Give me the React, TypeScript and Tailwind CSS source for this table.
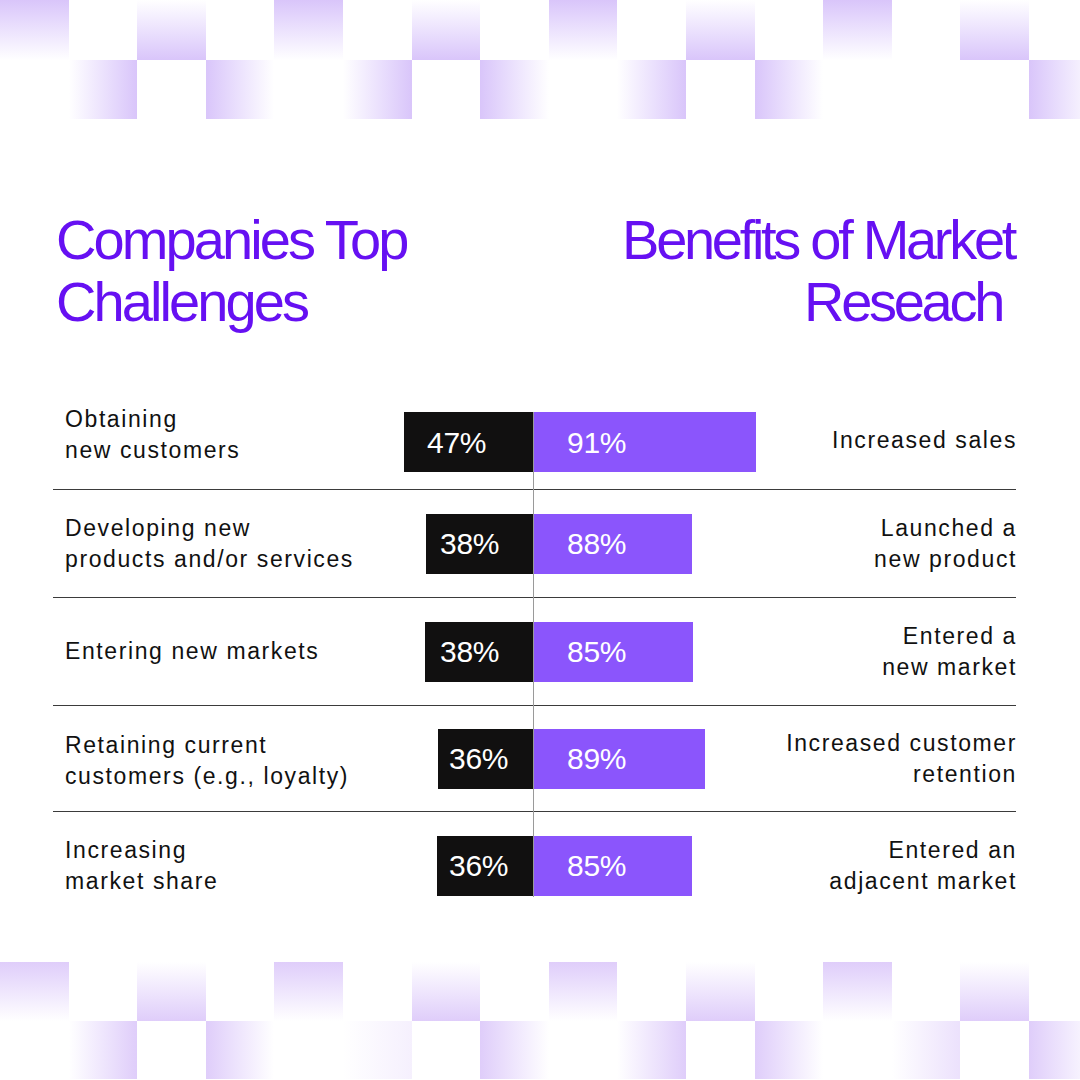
const font = { fontFamily: '"Liberation Sans", Arial, sans-serif' };

type Dir = "b" | "t" | "l" | "r" | null;

const dirClass: Record<string, string> = {
  b: "bg-linear-to-b",
  t: "bg-linear-to-t",
  l: "bg-linear-to-l",
  r: "bg-linear-to-r",
};

// each band: two rows of 16 cells, null = empty cell
const topBand: { h: string; cells: Dir[]; faint?: number[] }[] = [
  { h: "h-[60px]", cells: ["b", null, "t", null, "b", null, "t", null, "b", null, "t", null, "b", null, "t", null] },
  { h: "h-[59px]", cells: [null, "l", null, "r", null, "l", null, "r", null, "l", null, "r", null, null, null, "r"] },
];

const bottomBand: { h: string; cells: Dir[]; faint?: number[] }[] = [
  { h: "h-[59px]", cells: ["b", null, "t", null, "b", null, "t", null, "b", null, "t", null, "b", null, "t", null] },
  { h: "h-[58px]", cells: [null, "l", null, "r", null, "l", null, "r", null, "l", null, "r", null, "l", null, "r"], faint: [5, 13] },
];

function Band({ rows, color }: { rows: typeof topBand; color: string }) {
  return (
    <div className="flex flex-col overflow-hidden w-[1080px]">
      {rows.map((row, ri) => (
        <div key={ri} className={`flex ${row.h}`}>
          {row.cells.map((d, ci) => (
            <div
              key={ci}
              className={`w-[68.6px] shrink-0 h-full ${d ? `${dirClass[d]} ${color} to-white` : ""} ${
                row.faint?.includes(ci) ? (ci === 5 ? "opacity-30" : "opacity-60") : ""
              }`}
            />
          ))}
        </div>
      ))}
    </div>
  );
}

const rows = [
  {
    left: ["Obtaining", "new customers"],
    right: ["Increased sales"],
    a: "47%",
    b: "91%",
    aw: "w-[129px]",
    bw: "w-[223px]",
    apl: "pl-[23px]",
    h: "h-[94px]",
    lift: "-mt-[14px]",
  },
  {
    left: ["Developing new", "products and/or services"],
    right: ["Launched a", "new product"],
    a: "38%",
    b: "88%",
    aw: "w-[107px]",
    bw: "w-[159px]",
    apl: "pl-[14px]",
    h: "h-[108px]",
    lift: "",
  },
  {
    left: ["Entering new markets"],
    right: ["Entered a", "new market"],
    a: "38%",
    b: "85%",
    aw: "w-[108px]",
    bw: "w-[160px]",
    apl: "pl-[15px]",
    h: "h-[108px]",
    lift: "",
  },
  {
    left: ["Retaining current", "customers (e.g., loyalty)"],
    right: ["Increased customer", "retention"],
    a: "36%",
    b: "89%",
    aw: "w-[95px]",
    bw: "w-[172px]",
    apl: "pl-[11px]",
    h: "h-[106px]",
    lift: "mt-[4px]",
  },
  {
    left: ["Increasing", "market share"],
    right: ["Entered an", "adjacent market"],
    a: "36%",
    b: "85%",
    aw: "w-[96px]",
    bw: "w-[159px]",
    apl: "pl-[12px]",
    h: "h-[108px]",
    lift: "",
  },
];

export default function App() {
  return (
    <div className="w-[1080px] h-[1080px] bg-white overflow-hidden flex flex-col" style={font}>
      <Band rows={topBand} color="from-[#d9c5fa]" />

      <div className="ml-[53px] w-[963px] mt-[90px]">
        {/* titles */}
        <div className="flex justify-between text-[56px] leading-[62px] text-[#6610f2]">
          <h1 className="ml-[3px] tracking-[-2.9px]">
            Companies Top
            <br />
            Challenges
          </h1>
          <h1 className="text-right mr-[2px] tracking-[-3.3px]">
            Benefits of Market
            <br />
            <span className="pr-[12px]">Reseach</span>
          </h1>
        </div>

        {/* comparison table */}
        <div className="relative mt-[62px]">
          {rows.map((r, i) => (
            <div
              key={i}
              className={`flex items-center ${r.h} ${i > 0 ? "border-t-[1.5px] border-[#3b3b3b]" : ""}`}
            >
              <div className="w-[480px] flex items-center justify-between">
                <div className={`pl-[12px] text-[23px] leading-[31px] tracking-[1.6px] text-[#111] ${r.lift}`}>
                  {r.left.map((t) => (
                    <div key={t}>{t}</div>
                  ))}
                </div>
                <div
                  className={`${r.aw} h-[60px] bg-[#111010] flex items-center ${r.apl} text-white text-[30px] tracking-[-0.3px]`}
                >
                  {r.a}
                </div>
              </div>
              <div className="flex-1 flex items-center justify-between">
                <div
                  className={`${r.bw} h-[60px] bg-[#8b55fc] flex items-center pl-[34px] text-white text-[30px] tracking-[-0.3px]`}
                >
                  {r.b}
                </div>
                <div className={`text-right text-[23px] leading-[31px] tracking-[1.6px] text-[#111] -mr-[1px] ${i === 0 ? "-mt-[4px]" : ""}`}>
                  {r.right.map((t) => (
                    <div key={t}>{t}</div>
                  ))}
                </div>
              </div>
            </div>
          ))}
          {/* centre axis */}
          <div className="absolute left-[480px] top-[17px] bottom-[22px] w-px bg-[#9a9a9a]" />
        </div>
      </div>

      <div className="mt-[43px]">
        <Band rows={bottomBand} color="from-[#dfcdfa]" />
      </div>
    </div>
  );
}
